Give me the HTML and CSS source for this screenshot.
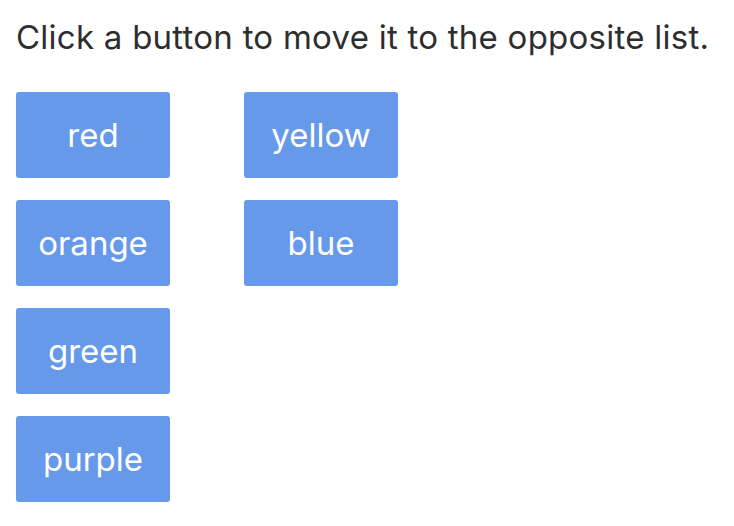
FILE: index.html
```html
<!DOCTYPE html>
<html>
<head>
<meta charset="utf-8">
<link rel="stylesheet" href="styles.css">
</head>
<body>
<p class="intro">Click a button to move it to the opposite list.</p>
<div class="lists">
  <div class="list">
    <button class="item">red</button>
    <button class="item">orange</button>
    <button class="item">green</button>
    <button class="item">purple</button>
  </div>
  <div class="list">
    <button class="item">yellow</button>
    <button class="item">blue</button>
  </div>
</div>
</body>
</html>
```

FILE: styles.css
```css
html, body {
  margin: 0;
  background: #ffffff;
}
body {
  padding: 0 16px;
  font-family: Inter, "Liberation Sans", sans-serif;
  color: #2e2e2e;
}
.intro {
  margin: 15px 0 0;
  font-size: 33px;
  line-height: 44px;
  letter-spacing: 0.25px;
}
.lists {
  display: flex;
  gap: 74px;
  margin-top: 33px;
}
.list {
  display: flex;
  flex-direction: column;
  gap: 22px;
}
.item {
  width: 154px;
  height: 86px;
  border: none;
  border-radius: 3px;
  background: #6699e9;
  color: #ffffff;
  font-family: Inter, "Liberation Sans", sans-serif;
  font-size: 33px;
  font-weight: 400;
  padding: 0;
  cursor: pointer;
}
```
